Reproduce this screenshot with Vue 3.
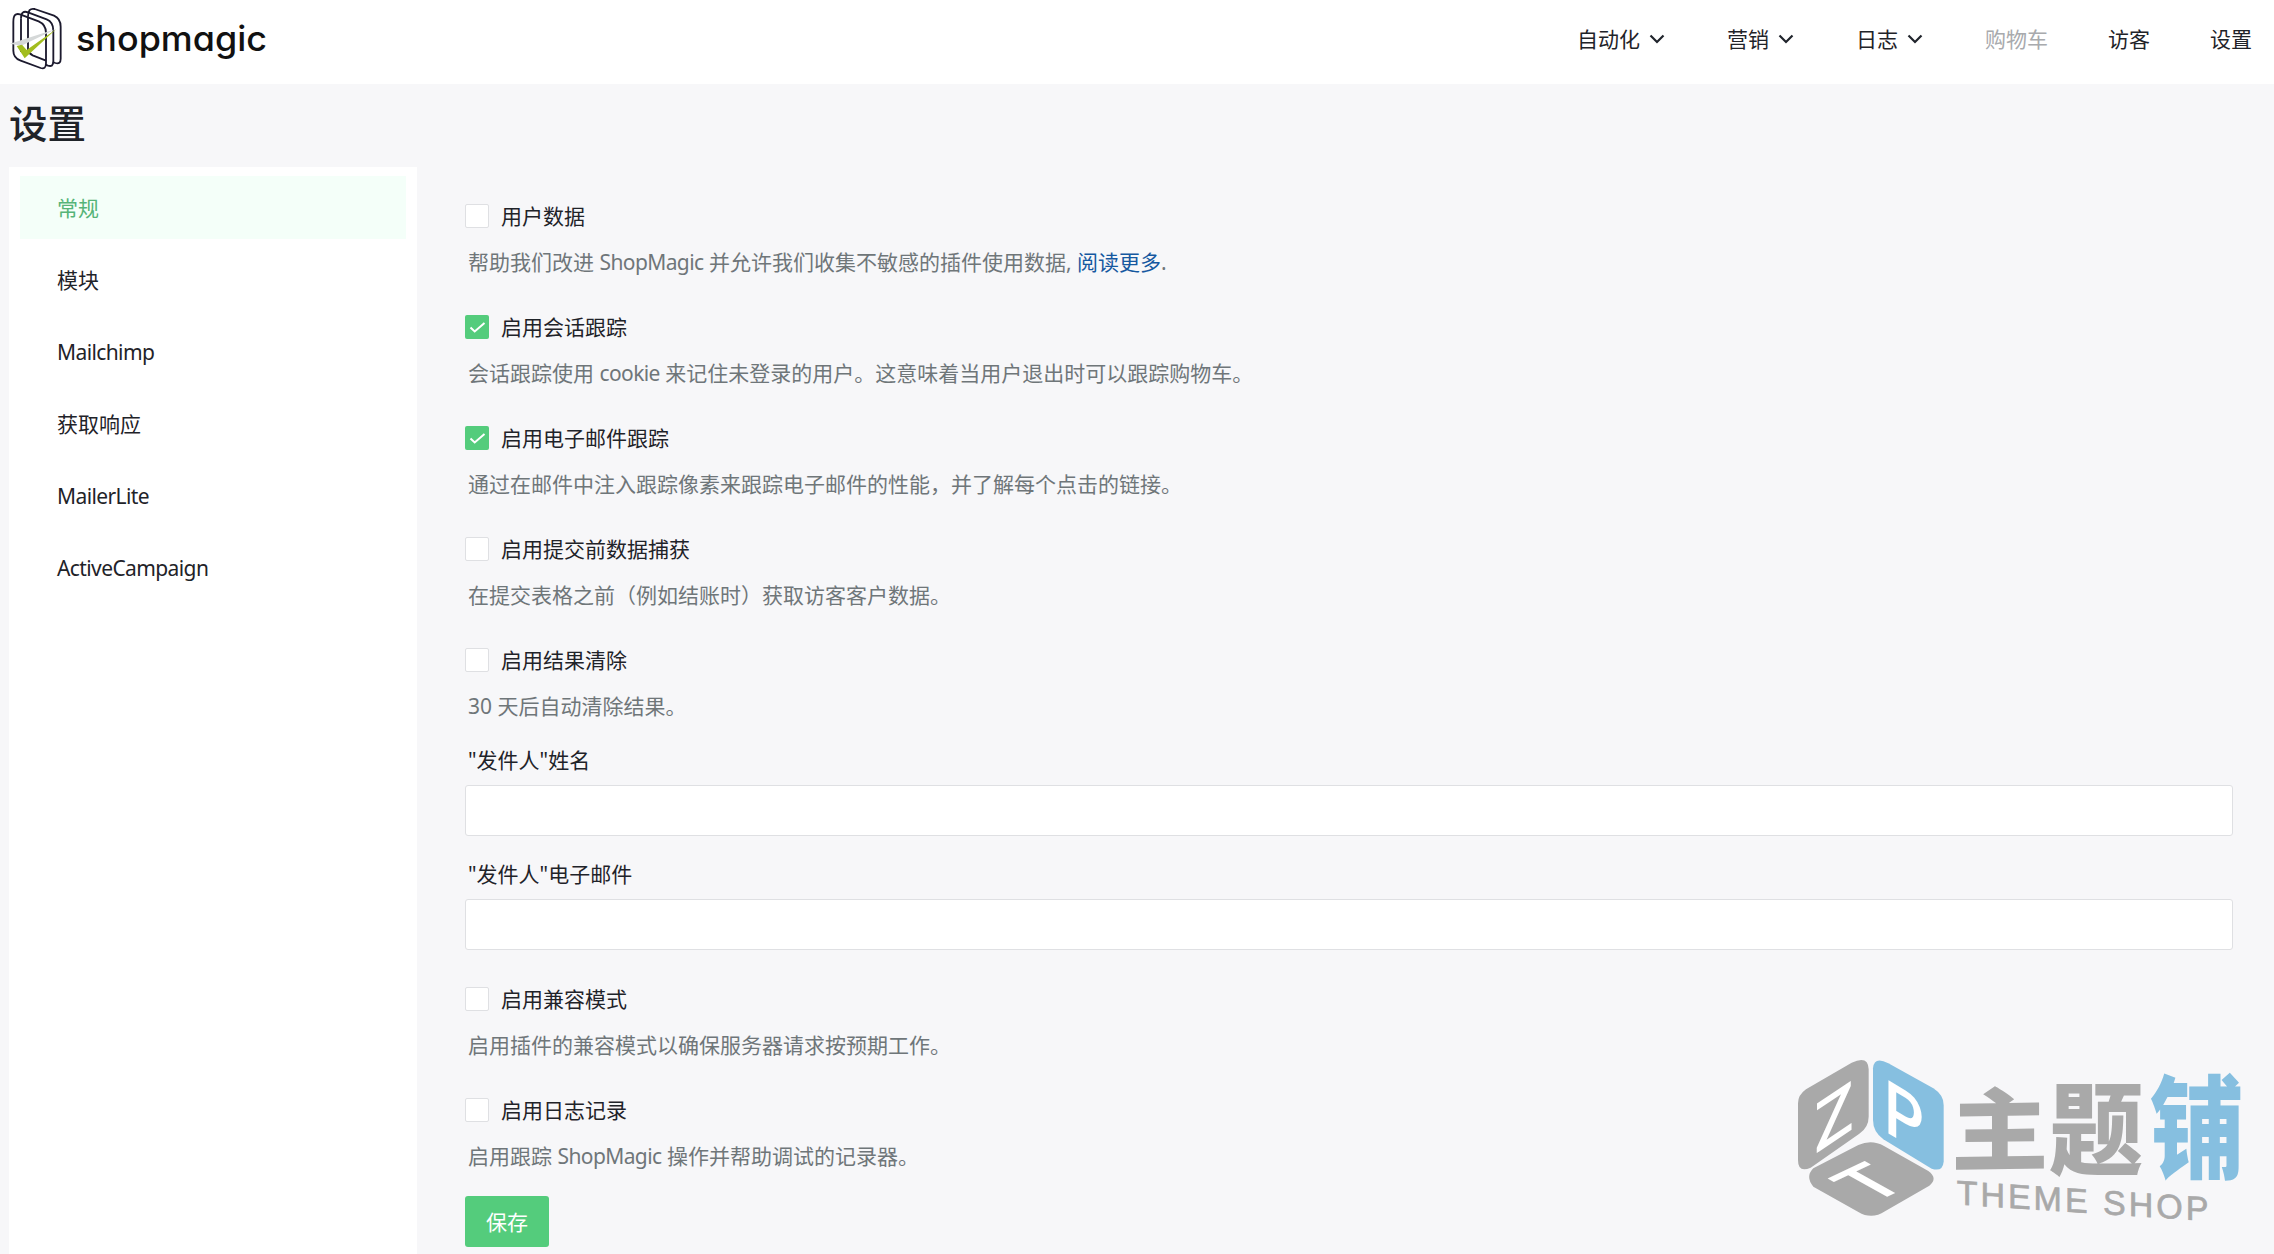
<template>
  <div class="page">
    <header class="topbar">
      <div class="brand">
        <svg class="brand-mark" width="62" height="70" viewBox="0 0 186 210" fill="none">
          <g stroke="#1c1a2e" stroke-width="5.500" stroke-linejoin="round">
            <path d="M84 50C84 32 90 24 104 27L162 47Q182 56 182 80V176Q182 194 166 189L158 186" />
            <path d="M84 50V150Q86 160 98 166L138 182" />
            <path d="M63 56C63 38 70 32 84 37L140 58Q160 66 160 92V184Q160 202 144 197L136 194" />
            <path d="M63 56V156" />
            <path d="M40 66C40 46 46 39 60 43L116 64Q138 74 138 98V190Q138 209 122 204L62 182Q40 174 40 152Z" />
          </g>
          <path d="M30 131L168 87L64 137Z" fill="#d5d8d8" />
          <path d="M50 138L66 134L80 150L168 88L74 175Z" fill="#a2bd1f" />
        </svg>
        <svg class="brand-name" width="196" height="52" viewBox="0 0 196 52">
          <text x="0" y="34" textLength="191" lengthAdjust="spacingAndGlyphs">shopmagic</text>
        </svg>
      </div>
      <nav class="menu">
        <a v-for="item in menu" :key="item.label" :class="{ muted: item.muted, parent: item.children }">
          {{ item.label }}
          <svg v-if="item.children" width="16" height="12" viewBox="0 0 16 12" fill="none">
            <path d="M1.500 2.500L8 9L14.500 2.500" stroke="#20242c" stroke-width="2.200" />
          </svg>
        </a>
      </nav>
    </header>

    <h1>设置</h1>

    <div class="content">
      <aside class="sidebar">
        <a v-for="tab in tabs" :key="tab" :class="['tab', { active: tab === activeTab, latin: isLatin(tab) }]">{{ tab }}</a>
      </aside>

      <main class="form">
        <div v-for="opt in trackingOptions" :key="opt.label" class="option">
          <label class="check-row">
            <span :class="['check', { checked: opt.checked }]">
              <svg v-if="opt.checked" width="24" height="24" viewBox="0 0 24 24" fill="none">
                <path d="M5.500 12.500L9.700 16.500L19.500 8" stroke="#fff" stroke-width="2" />
              </svg>
            </span>
            {{ opt.label }}
          </label>
          <p class="hint">
            <span v-for="(part, i) in split(opt.hint)" :key="i" :class="{ latin: isLatin(part) }">{{ part }}</span>
            <template v-if="opt.link">&nbsp;<a class="link">{{ opt.link }}</a>.</template>
          </p>
        </div>

        <div v-for="field in fields" :key="field" class="field">
          <label>{{ field }}</label>
          <input type="text" />
        </div>

        <div v-for="opt in debugOptions" :key="opt.label" class="option debug">
          <label class="check-row">
            <span class="check"></span>
            {{ opt.label }}
          </label>
          <p class="hint">
            <span v-for="(part, i) in split(opt.hint)" :key="i" :class="{ latin: isLatin(part) }">{{ part }}</span>
          </p>
        </div>

        <button class="save">保存</button>
      </main>
    </div>

    <svg class="watermark" width="494" height="214" viewBox="0 0 1482 642">
      <g fill="#a9a9a9">
        <path d="M54 190Q54 165 78 148L215 68Q265 45 266 88V230Q266 262 238 281L92 383Q54 400 54 360Z" />
        <path d="M100 385L235 315Q275 297 312 318L445 393Q475 415 448 437L315 514Q275 540 235 516L100 440Q75 410 100 385Z" />
      </g>
      <path d="M279 85Q282 48 325 70L460 145Q491 165 491 195V365Q488 397 455 386L310 298Q279 275 279 240Z" fill="#86bfe0" />
      <g class="cube-letters">
        <text transform="matrix(0.98 -0.66 0 1.040 103 344)">Z</text>
        <text transform="matrix(0.94 0.56 0 1.120 312 272)">P</text>
        <text transform="matrix(0.98 -0.46 0.95 0.53 274 493)">T</text>
      </g>
      <g class="shop-name">
        <text transform="matrix(1.040 -0.015 0 0.96 514 372)">主</text>
        <text transform="matrix(1.010 0 0 1.080 807 380)">题</text>
        <text class="blue" transform="matrix(1.010 0 0 1.200 1109 389)">铺</text>
      </g>
      <text class="shop-sub" transform="matrix(1 0.066 0 1 530 493)" textLength="755">THEME SHOP</text>
    </svg>
  </div>
</template>

<script setup>
const menu = [
  { label: '自动化', children: true },
  { label: '营销', children: true },
  { label: '日志', children: true },
  { label: '购物车', muted: true },
  { label: '访客' },
  { label: '设置' },
]

const activeTab = '常规'
const tabs = ['常规', '模块', 'Mailchimp', '获取响应', 'MailerLite', 'ActiveCampaign']

const trackingOptions = [
  {
    label: '用户数据',
    hint: '帮助我们改进 ShopMagic 并允许我们收集不敏感的插件使用数据,',
    link: '阅读更多',
  },
  {
    label: '启用会话跟踪',
    checked: true,
    hint: '会话跟踪使用 cookie 来记住未登录的用户。这意味着当用户退出时可以跟踪购物车。',
  },
  {
    label: '启用电子邮件跟踪',
    checked: true,
    hint: '通过在邮件中注入跟踪像素来跟踪电子邮件的性能，并了解每个点击的链接。',
  },
  {
    label: '启用提交前数据捕获',
    hint: '在提交表格之前（例如结账时）获取访客客户数据。',
  },
  {
    label: '启用结果清除',
    hint: '30 天后自动清除结果。',
  },
]

const fields = ['"发件人"姓名', '"发件人"电子邮件']

const debugOptions = [
  { label: '启用兼容模式', hint: '启用插件的兼容模式以确保服务器请求按预期工作。' },
  { label: '启用日志记录', hint: '启用跟踪 ShopMagic 操作并帮助调试的记录器。' },
]

// Latin words are set a little tighter than the Chinese text around them
function split(text) {
  return text.split(/([A-Za-z]+)/)
}

function isLatin(text) {
  return /^[A-Za-z]+$/.test(text)
}
</script>

<style>
body {
  background: #f7f7f9;
}
</style>

<style scoped>
.page {
  position: relative;
  display: flex;
  flex-direction: column;
  height: 100vh;
  overflow: hidden;
  background: #f7f7f9;
  color: #1f2329;
  font-family: 'Noto Sans', 'Noto Sans CJK SC', sans-serif;
  font-size: 21px;
  line-height: 30px;
}

.topbar {
  display: flex;
  flex: none;
  justify-content: space-between;
  box-sizing: border-box;
  height: 84px;
  padding-right: 22px;
  background: #fff;
}

.brand {
  display: flex;
}

.brand-name {
  margin: 17px 0 0 14px;
  overflow: visible;
}

.brand-name text {
  font-family: Inter, sans-serif;
  font-size: 35px;
  font-weight: 500;
  font-feature-settings: 'cv11' 1;
  fill: #111;
}

.menu {
  display: flex;
  align-items: center;
  height: 78px;
  gap: 60px;
}

.menu a {
  display: flex;
  align-items: center;
  gap: 9px;
}

.menu .parent {
  padding-right: 2px;
}

.menu .muted {
  color: #a8aaad;
}

h1 {
  flex: none;
  margin: 15px 0 0 9px;
  font-size: 38.5px;
  font-weight: 500;
  line-height: 48px;
  height: 68px;
}

.content {
  display: flex;
  flex: 1;
  min-height: 0;
}

.sidebar {
  display: flex;
  flex: none;
  flex-direction: column;
  gap: 9px;
  box-sizing: border-box;
  width: 408px;
  margin-left: 9px;
  padding: 9px 11px;
  background: #fff;
}

.tab {
  height: 63px;
  padding-left: 37px;
  line-height: 65px;
}

.tab.active {
  background: #f4fff9;
  color: #55b478;
}

.latin {
  letter-spacing: -0.6px;
}

.form {
  flex: 1;
  padding: 34px 41px 0 48px;
}

.option {
  height: 111px;
}

.check-row {
  display: flex;
  align-items: center;
  gap: 12px;
  height: 30px;
}

.check {
  box-sizing: border-box;
  width: 24px;
  height: 24px;
  border: 1px solid #dfe0e3;
  border-radius: 2px;
  background: #fff;
}

.check.checked {
  border: none;
  background: #54cc7c;
}

.check svg {
  display: block;
}

.hint {
  margin: 16px 0 0 3px;
  color: #6f7679;
}

.link {
  color: #1558a0;
}

.field {
  height: 114px;
}

.field:nth-of-type(6) {
  margin-top: -11px;
}

.field label {
  display: block;
  height: 40px;
  margin-left: 3px;
}

.field input {
  display: block;
  box-sizing: border-box;
  width: 100%;
  height: 51px;
  border: 1px solid #dfe0e3;
  border-radius: 3px;
  background: #fff;
}

.field + .debug {
  margin-top: 11px;
}

.save {
  display: block;
  width: 84px;
  height: 51px;
  margin-top: -10px;
  padding: 0;
  border: 0;
  border-radius: 3px;
  background: #54cc7c;
  color: #fff;
  font: inherit;
}

.watermark {
  position: absolute;
  right: 0;
  bottom: 0;
}

.cube-letters text {
  font-family: Roboto, sans-serif;
  font-size: 200px;
  font-weight: 500;
  fill: #fff;
}

.shop-name text {
  font-family: 'Noto Sans CJK SC', sans-serif;
  font-size: 280px;
  font-weight: 900;
  fill: #a9a9a9;
}

.shop-name .blue {
  fill: #86bfe0;
}

.shop-sub {
  font-family: 'Liberation Sans', sans-serif;
  font-size: 102px;
  fill: #a9a9a9;
  stroke: #a9a9a9;
  stroke-width: 2;
}
</style>
